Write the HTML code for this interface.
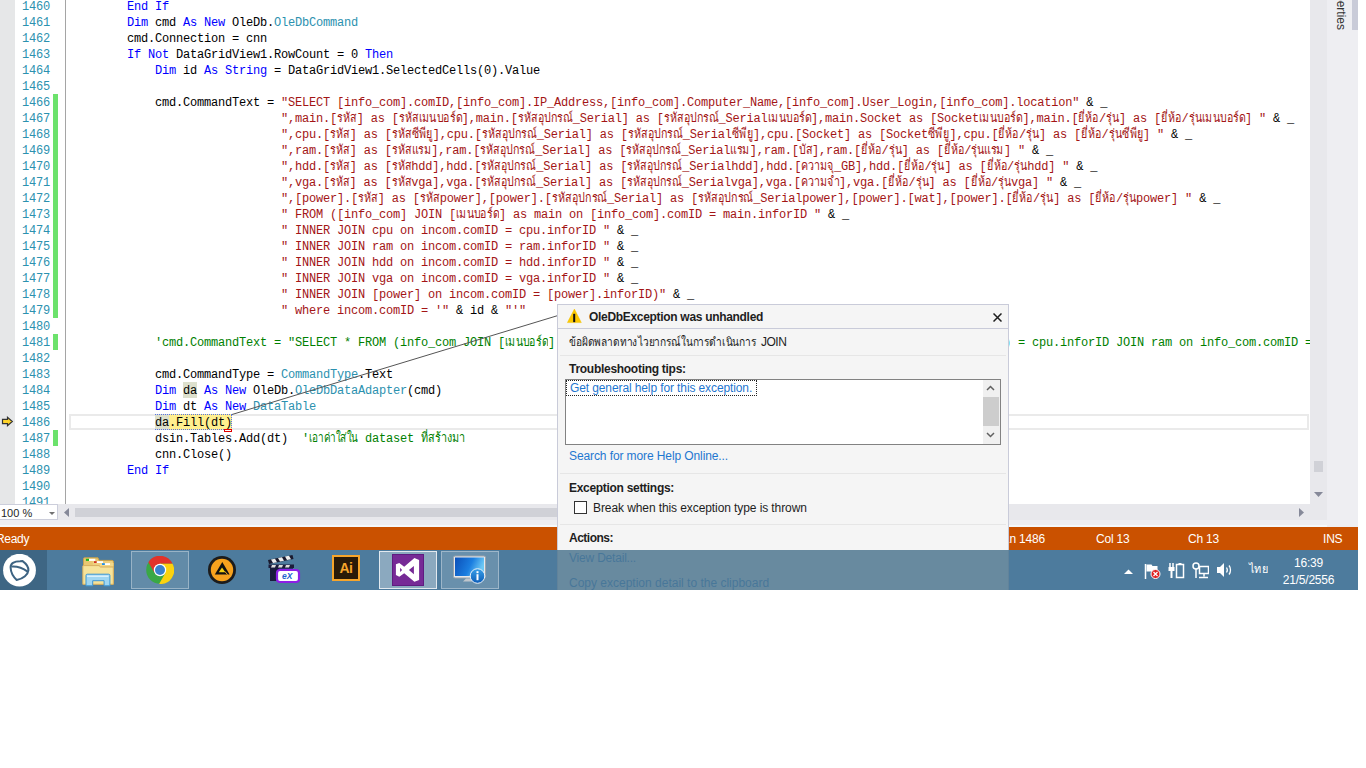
<!DOCTYPE html>
<html><head><meta charset="utf-8">
<style>
*{box-sizing:border-box}
html,body{margin:0;padding:0}
body{width:1366px;height:768px;background:#fff;position:relative;overflow:hidden;font-family:"Liberation Sans",sans-serif}
.a{position:absolute}
#scr{position:absolute;left:0;top:0;width:1358px;height:590px;background:#eeeef2;overflow:hidden}
#ed{position:absolute;left:0;top:0;width:1310px;height:504px;background:#fff;overflow:hidden}
#marg{position:absolute;left:0;top:0;width:15px;height:505px;background:#e6e7e8}
.ln{position:absolute;left:15px;width:35px;height:16px;line-height:16px;text-align:right;font-family:"Liberation Mono",monospace;font-size:12px;letter-spacing:-0.2px;color:#2b91af;white-space:pre}
.cl{position:absolute;height:16px;line-height:16px;font-family:"Liberation Mono",monospace;font-size:12px;letter-spacing:-0.2px;color:#000;white-space:pre}
.cl i{font-style:normal;display:inline-block;letter-spacing:0;overflow:visible;white-space:pre}
.cl i b{font-weight:normal;display:inline-block;font-size:13px;transform-origin:0 0}
.k{color:#0000ff}.t{color:#2b91af}.s{color:#a31515}.c{color:#008000}
.hl1{background:#dde0cd}
.hl2{background:#ffef8f}
.gb{position:absolute;left:53px;width:5px;background:#6ce26c}
#sep{position:absolute;left:65px;top:0;width:1px;height:505px;background:#a5a5a5}
#cur{position:absolute;left:69px;top:414px;width:1240px;height:16px;border:2px solid #eaeaea}

#vs{position:absolute;left:1310px;top:0;width:17px;height:520px;background:#e8e8ec}
#side{position:absolute;left:1327px;top:0;width:31px;height:527px;background:#eeeef2}
#hs{position:absolute;left:0;top:504px;width:1310px;height:16px;background:#e8e8ec}
#zoom{position:absolute;left:0;top:504px;width:58px;height:16px;background:#fff;border:1px solid #cccedb;border-left:0;font-size:11px;line-height:15px;padding-left:1px;padding-top:1px;color:#1e1e1e;letter-spacing:0px}
#status{position:absolute;left:0;top:527px;width:1358px;height:23px;background:#ca5100;color:#fff;font-size:12px;line-height:23px}
#status span{position:absolute;top:1px;white-space:pre}
#tb{position:absolute;left:0;top:550px;width:1358px;height:40px;background:linear-gradient(90deg,#4a7aa0 0%,#4f80a6 40%,#4a789c 70%,#467597 100%)}
.btn{position:absolute;top:1px;width:58px;height:38px;border:1px solid rgba(255,255,255,.35);background:rgba(255,255,255,.12)}
#dlg{position:absolute;left:557px;top:304px;width:452px;height:300px;background:#f5f5f5;border:1px solid #c9cbd9;font-size:12px;color:#1e1e1e}
#dlg .b{font-weight:bold;position:absolute;white-space:pre}
#dlg .p{position:absolute;white-space:pre}
.sepl{position:absolute;left:2px;width:446px;height:1px;background:#e6e6e6}
#tbov{position:absolute;left:0;top:550px;width:1358px;height:40px;}
</style></head><body>
<div id="scr">
 <div id="ed">
  <div id="marg"></div>
  <div class="ln" style="top:-1px">1460</div>
<div class="ln" style="top:15px">1461</div>
<div class="ln" style="top:31px">1462</div>
<div class="ln" style="top:47px">1463</div>
<div class="ln" style="top:63px">1464</div>
<div class="ln" style="top:79px">1465</div>
<div class="ln" style="top:95px">1466</div>
<div class="ln" style="top:111px">1467</div>
<div class="ln" style="top:127px">1468</div>
<div class="ln" style="top:143px">1469</div>
<div class="ln" style="top:159px">1470</div>
<div class="ln" style="top:175px">1471</div>
<div class="ln" style="top:191px">1472</div>
<div class="ln" style="top:207px">1473</div>
<div class="ln" style="top:223px">1474</div>
<div class="ln" style="top:239px">1475</div>
<div class="ln" style="top:255px">1476</div>
<div class="ln" style="top:271px">1477</div>
<div class="ln" style="top:287px">1478</div>
<div class="ln" style="top:303px">1479</div>
<div class="ln" style="top:319px">1480</div>
<div class="ln" style="top:335px">1481</div>
<div class="ln" style="top:351px">1482</div>
<div class="ln" style="top:367px">1483</div>
<div class="ln" style="top:383px">1484</div>
<div class="ln" style="top:399px">1485</div>
<div class="ln" style="top:415px">1486</div>
<div class="ln" style="top:431px">1487</div>
<div class="ln" style="top:447px">1488</div>
<div class="ln" style="top:463px">1489</div>
<div class="ln" style="top:479px">1490</div>
<div class="ln" style="top:495px">1491</div>
  <div class="gb" style="top:94px;height:224px"></div>
  <div class="gb" style="top:334px;height:16px"></div>
  <div class="gb" style="top:430px;height:16px"></div>
  <div id="sep"></div>
  <div id="cur"></div>
  <!-- execution arrow -->
  <svg class="a" style="left:1px;top:416px" width="13" height="11" viewBox="0 0 13 11"><path d="M1.5 3.4H6.5V1.3L11.3 5.5L6.5 9.7V7.6H1.5z" fill="#ffd42a" stroke="#333" stroke-width="1.2" stroke-linejoin="miter"/></svg>
  <div class="cl" style="top:-1px;left:127px"><span class="k">End If</span></div>
<div class="cl" style="top:15px;left:127px"><span class="k">Dim</span> cmd <span class="k">As New</span> OleDb.<span class="t">OleDbCommand</span></div>
<div class="cl" style="top:31px;left:127px">cmd.Connection = cnn</div>
<div class="cl" style="top:47px;left:127px"><span class="k">If Not</span> DataGridView1.RowCount = 0 <span class="k">Then</span></div>
<div class="cl" style="top:63px;left:155px"><span class="k">Dim</span> id <span class="k">As String</span> = DataGridView1.SelectedCells(0).Value</div>
<div class="cl" style="top:95px;left:155px">cmd.CommandText = <span class="s">"SELECT [info_com].comID,[info_com].IP_Address,[info_com].Computer_Name,[info_com].User_Login,[info_com].location"</span> &amp; _</div>
<div class="cl" style="top:111px;left:281px"><span class="s">",main.[<i style="width:19.66px"><b style="transform:scaleX(0.819)">รหัส</b></i>] as [<i style="width:63.09px"><b style="transform:scaleX(0.819)">รหัสเมนบอร์ด</b></i>],main.[<i style="width:54.89px"><b style="transform:scaleX(0.819)">รหัสอุปกรณ์</b></i>_Serial] as [<i style="width:54.89px"><b style="transform:scaleX(0.819)">รหัสอุปกรณ์</b></i>_Serial<i style="width:43.42px"><b style="transform:scaleX(0.819)">เมนบอร์ด</b></i>],main.Socket as [Socket<i style="width:43.42px"><b style="transform:scaleX(0.819)">เมนบอร์ด</b></i>],main.[<i style="width:20.48px"><b style="transform:scaleX(0.819)">ยี่ห้อ</b></i>/<i style="width:13.11px"><b style="transform:scaleX(0.819)">รุ่น</b></i>] as [<i style="width:20.48px"><b style="transform:scaleX(0.819)">ยี่ห้อ</b></i>/<i style="width:56.53px"><b style="transform:scaleX(0.819)">รุ่นเมนบอร์ด</b></i>] "</span> &amp; _</div>
<div class="cl" style="top:127px;left:281px"><span class="s">",cpu.[<i style="width:19.70px"><b style="transform:scaleX(0.821)">รหัส</b></i>] as [<i style="width:41.03px"><b style="transform:scaleX(0.821)">รหัสซีพียู</b></i>],cpu.[<i style="width:54.98px"><b style="transform:scaleX(0.821)">รหัสอุปกรณ์</b></i>_Serial] as [<i style="width:54.98px"><b style="transform:scaleX(0.821)">รหัสอุปกรณ์</b></i>_Serial<i style="width:21.34px"><b style="transform:scaleX(0.821)">ซีพียู</b></i>],cpu.[Socket] as [Socket<i style="width:21.34px"><b style="transform:scaleX(0.821)">ซีพียู</b></i>],cpu.[<i style="width:20.52px"><b style="transform:scaleX(0.821)">ยี่ห้อ</b></i>/<i style="width:13.13px"><b style="transform:scaleX(0.821)">รุ่น</b></i>] as [<i style="width:20.52px"><b style="transform:scaleX(0.821)">ยี่ห้อ</b></i>/<i style="width:34.47px"><b style="transform:scaleX(0.821)">รุ่นซีพียู</b></i>] "</span> &amp; _</div>
<div class="cl" style="top:143px;left:281px"><span class="s">",ram.[<i style="width:19.70px"><b style="transform:scaleX(0.821)">รหัส</b></i>] as [<i style="width:39.41px"><b style="transform:scaleX(0.821)">รหัสแรม</b></i>],ram.[<i style="width:55.01px"><b style="transform:scaleX(0.821)">รหัสอุปกรณ์</b></i>_Serial] as [<i style="width:55.01px"><b style="transform:scaleX(0.821)">รหัสอุปกรณ์</b></i>_Serial<i style="width:19.70px"><b style="transform:scaleX(0.821)">แรม</b></i>],ram.[<i style="width:13.14px"><b style="transform:scaleX(0.821)">บัส</b></i>],ram.[<i style="width:20.53px"><b style="transform:scaleX(0.821)">ยี่ห้อ</b></i>/<i style="width:13.14px"><b style="transform:scaleX(0.821)">รุ่น</b></i>] as [<i style="width:20.53px"><b style="transform:scaleX(0.821)">ยี่ห้อ</b></i>/<i style="width:32.84px"><b style="transform:scaleX(0.821)">รุ่นแรม</b></i>] "</span> &amp; _</div>
<div class="cl" style="top:159px;left:281px"><span class="s">",hdd.[<i style="width:19.66px"><b style="transform:scaleX(0.819)">รหัส</b></i>] as [<i style="width:19.66px"><b style="transform:scaleX(0.819)">รหัส</b></i>hdd],hdd.[<i style="width:54.88px"><b style="transform:scaleX(0.819)">รหัสอุปกรณ์</b></i>_Serial] as [<i style="width:54.88px"><b style="transform:scaleX(0.819)">รหัสอุปกรณ์</b></i>_Serialhdd],hdd.[<i style="width:32.76px"><b style="transform:scaleX(0.819)">ความจุ</b></i>_GB],hdd.[<i style="width:20.48px"><b style="transform:scaleX(0.819)">ยี่ห้อ</b></i>/<i style="width:13.11px"><b style="transform:scaleX(0.819)">รุ่น</b></i>] as [<i style="width:20.48px"><b style="transform:scaleX(0.819)">ยี่ห้อ</b></i>/<i style="width:13.11px"><b style="transform:scaleX(0.819)">รุ่น</b></i>hdd] "</span> &amp; _</div>
<div class="cl" style="top:175px;left:281px"><span class="s">",vga.[<i style="width:19.60px"><b style="transform:scaleX(0.817)">รหัส</b></i>] as [<i style="width:19.60px"><b style="transform:scaleX(0.817)">รหัส</b></i>vga],vga.[<i style="width:54.72px"><b style="transform:scaleX(0.817)">รหัสอุปกรณ์</b></i>_Serial] as [<i style="width:54.72px"><b style="transform:scaleX(0.817)">รหัสอุปกรณ์</b></i>_Serialvga],vga.[<i style="width:38.39px"><b style="transform:scaleX(0.817)">ความจำ</b></i>],vga.[<i style="width:20.42px"><b style="transform:scaleX(0.817)">ยี่ห้อ</b></i>/<i style="width:13.07px"><b style="transform:scaleX(0.817)">รุ่น</b></i>] as [<i style="width:20.42px"><b style="transform:scaleX(0.817)">ยี่ห้อ</b></i>/<i style="width:13.07px"><b style="transform:scaleX(0.817)">รุ่น</b></i>vga] "</span> &amp; _</div>
<div class="cl" style="top:191px;left:281px"><span class="s">",[power].[<i style="width:19.82px"><b style="transform:scaleX(0.826)">รหัส</b></i>] as [<i style="width:19.82px"><b style="transform:scaleX(0.826)">รหัส</b></i>power],[power].[<i style="width:55.33px"><b style="transform:scaleX(0.826)">รหัสอุปกรณ์</b></i>_Serial] as [<i style="width:55.33px"><b style="transform:scaleX(0.826)">รหัสอุปกรณ์</b></i>_Serialpower],[power].[wat],[power].[<i style="width:20.64px"><b style="transform:scaleX(0.826)">ยี่ห้อ</b></i>/<i style="width:13.21px"><b style="transform:scaleX(0.826)">รุ่น</b></i>] as [<i style="width:20.64px"><b style="transform:scaleX(0.826)">ยี่ห้อ</b></i>/<i style="width:13.21px"><b style="transform:scaleX(0.826)">รุ่น</b></i>power] "</span> &amp; _</div>
<div class="cl" style="top:207px;left:281px"><span class="s">" FROM ([info_com] JOIN [<i style="width:43.00px"><b style="transform:scaleX(0.811)">เมนบอร์ด</b></i>] as main on [info_com].comID = main.inforID "</span> &amp; _</div>
<div class="cl" style="top:223px;left:281px"><span class="s">" INNER JOIN cpu on incom.comID = cpu.inforID "</span> &amp; _</div>
<div class="cl" style="top:239px;left:281px"><span class="s">" INNER JOIN ram on incom.comID = ram.inforID "</span> &amp; _</div>
<div class="cl" style="top:255px;left:281px"><span class="s">" INNER JOIN hdd on incom.comID = hdd.inforID "</span> &amp; _</div>
<div class="cl" style="top:271px;left:281px"><span class="s">" INNER JOIN vga on incom.comID = vga.inforID "</span> &amp; _</div>
<div class="cl" style="top:287px;left:281px"><span class="s">" INNER JOIN [power] on incom.comID = [power].inforID)"</span> &amp; _</div>
<div class="cl" style="top:303px;left:281px"><span class="s">" where incom.comID = '"</span> &amp; id &amp; <span class="s">"'"</span></div>
<div class="cl" style="top:335px;left:155px"><span class=c>'cmd.CommandText = "SELECT * FROM (info_com JOIN [<i style="width:43.00px"><b style="transform:scaleX(0.811)">เมนบอร์ด</b></i>] as main on info_com.comID = main.inforID) JOIN cpu on info_com.comID = cpu.inforID JOIN ram on info_com.comID = </span></div>
<div class="cl" style="top:335px;left:1004px;background:#fff;padding-right:40px"><span class="c">) = cpu.inforID JOIN ram on info_com.comID = main.inforID</span></div>
<div class="cl" style="top:367px;left:155px">cmd.CommandType = <span class="t">CommandType</span>.Text</div>
<div class="a" style="left:183px;top:382px;width:14px;height:16px;background:#dde0cd"></div>
<div class="cl" style="top:383px;left:155px"><span class="k">Dim</span> da <span class="k">As New</span> OleDb.<span class="t">OleDbDataAdapter</span>(cmd)</div>
<div class="cl" style="top:399px;left:155px"><span class="k">Dim</span> dt <span class="k">As New</span> <span class="t">DataTable</span></div>
<div class="a" style="left:155px;top:414px;width:14px;height:16px;background:#dde0cd"></div><div class="a" style="left:169px;top:414px;width:63px;height:16px;background:#ffef8f"></div><div class="cl" style="top:415px;left:155px">da.Fill(dt)</div>
<div class="cl" style="top:431px;left:155px">dsin.Tables.Add(dt)  <span class="c">'<i style="width:49.00px"><b style="transform:scaleX(0.766)">เอาค่าใส่ใน</b></i> dataset <i style="width:44.00px"><b style="transform:scaleX(0.830)">ที่สร้างมา</b></i></span></div>
<div class="cl" style="top:447px;left:155px">cnn.Close()</div>
<div class="cl" style="top:463px;left:127px"><span class="k">End If</span></div>
  <div class="a" style="left:155px;top:429px;width:77px;height:1px;border-top:1px dotted #5a74e6"></div>
  <div class="a" style="left:155px;top:414px;width:77px;height:1px;border-top:1px dotted #5a74e6"></div>
  <div class="a" style="left:231px;top:414px;width:1px;height:16px;border-left:1px dotted #5a74e6"></div>
  <div class="a" style="left:224px;top:429px;width:8px;height:3px;border:1px solid #e00000;background:#fff"></div>
  <svg class="a" style="left:0;top:0" width="1310" height="505"><line x1="232" y1="414.5" x2="558" y2="315.5" stroke="#555" stroke-width="1"/></svg>
 </div>

 <div id="vs">
  <div class="a" style="left:4px;top:461px;width:9px;height:11px;background:#d0d1d7"></div>
  <svg class="a" style="left:4px;top:492px" width="9" height="5"><path d="M0 0H9L4.5 5z" fill="#868999"/></svg>
 </div>
 <div id="side">
  <div class="a" style="left:25px;top:0;width:6px;height:30px;background:#c9cbd8"></div>
  <div class="a" style="left:3px;top:-30px;width:30px;height:14px;transform:rotate(90deg);transform-origin:0 0;left:21px;font-size:12px;color:#333;white-space:pre;line-height:14px;text-align:right;width:60px">operties</div>
 </div>
 <div id="hs">
  <svg class="a" style="left:64px;top:4px" width="5" height="9"><path d="M5 0V9L0 4.5z" fill="#868999"/></svg>
  <div class="a" style="left:75px;top:4px;width:600px;height:9px;background:#d0d1d7"></div>
  <svg class="a" style="left:1299px;top:4px" width="5" height="9"><path d="M0 0V9L5 4.5z" fill="#868999"/></svg>
 </div>
 <div id="zoom">100 %<svg class="a" style="left:49px;top:7px" width="6" height="3"><path d="M0 0H6L3 3z" fill="#717171"/></svg></div>
 <div class="a" style="left:0;top:525px;width:1327px;height:2px;background:#f5f9fc"></div>
 <div id="status">
  <span style="left:-4px;letter-spacing:-0.3px">Ready</span>
  <span style="left:1003px;letter-spacing:-0.2px">Ln 1486</span>
  <span style="left:1096px;letter-spacing:-0.2px">Col 13</span>
  <span style="left:1188px;letter-spacing:-0.2px">Ch 13</span>
  <span style="left:1323px;letter-spacing:-0.2px">INS</span>
 </div>
 <div class="a" style="left:0;top:550px;width:1358px;height:40px;background:rgb(72,145,232)"></div>
 <div id="dlg">
  <div class="a" style="left:0;top:0;width:450px;height:24px;background:#f5f5f5;border-bottom:1px solid #c9cbd9"></div>
  <svg class="a" style="left:9px;top:3px" width="16" height="16" viewBox="0 0 16 16"><path d="M7.4 1.1L14.3 14.6H0.4z" fill="#fcc800" stroke="#f0c000" stroke-width=".5" stroke-linejoin="round"/><rect x="6.2" y="5.8" width="2" height="8.3" fill="#111"/></svg>
  <div class="b" style="left:31px;top:5px;line-height:14px;letter-spacing:-0.31px;color:#1e1e1e">OleDbException was unhandled</div>
  <svg class="a" style="left:435px;top:8px" width="9" height="9"><path d="M0.5 0.5L8.5 8.5M8.5 0.5L0.5 8.5" stroke="#1e1e1e" stroke-width="1.5"/></svg>
  <div class="p" style="left:11px;top:30px;line-height:14px;font-size:12px;color:#1e1e1e"><i style="font-style:normal;display:inline-block;width:187px"><b style="font-weight:normal;display:inline-block;font-size:12px;transform-origin:0 0;transform:scaleX(0.85)">ข้อผิดพลาดทางไวยากรณ์ในการดำเนินการ</b></i></div>
  <div class="p" style="left:203px;top:30px;line-height:14px;letter-spacing:-0.5px">JOIN</div>
  <div class="sepl" style="top:50px"></div>
  <div class="b" style="left:11px;top:57px;line-height:14px;letter-spacing:-0.28px">Troubleshooting tips:</div>
  <div class="a" style="left:7px;top:74px;width:436px;height:66px;background:#fff;border:1px solid #828282">
    <div class="a" style="left:0px;top:0px;width:191px;height:16px;border:1px dotted #222"></div>
    <div class="p" style="left:4px;top:1px;line-height:14px;color:#1f77d0;letter-spacing:-0.11px">Get general help for this exception.</div>
    <div class="a" style="left:417px;top:0;width:17px;height:64px;background:#f0f0f0"></div>
    <div class="a" style="left:417px;top:17px;width:16px;height:29px;background:#cdcdcd"></div>
    <svg class="a" style="left:420px;top:5px" width="9" height="6"><path d="M1 5L4.5 1.5L8 5" fill="none" stroke="#606060" stroke-width="1.5"/></svg>
    <svg class="a" style="left:420px;top:52px" width="9" height="6"><path d="M1 1L4.5 4.5L8 1" fill="none" stroke="#606060" stroke-width="1.5"/></svg>
  </div>
  <div class="p" style="left:11px;top:144px;line-height:14px;color:#1f77d0;letter-spacing:-0.1px">Search for more Help Online...</div>
  <div class="sepl" style="top:168px"></div>
  <div class="b" style="left:11px;top:176px;line-height:14px;letter-spacing:-0.3px">Exception settings:</div>
  <div class="a" style="left:16px;top:196px;width:13px;height:13px;background:#fff;border:1px solid #333"></div>
  <div class="p" style="left:35px;top:196px;line-height:14px;letter-spacing:-0.09px">Break when this exception type is thrown</div>
  <div class="sepl" style="top:219px"></div>
  <div class="b" style="left:11px;top:226px;line-height:14px;letter-spacing:-0.5px">Actions:</div>
  <div class="p" style="left:11px;top:246px;line-height:14px;color:#1f77d0;letter-spacing:-0.2px">View Detail...</div>
  <div class="p" style="left:11px;top:271px;line-height:14px;color:#1f77d0;letter-spacing:0px">Copy exception detail to the clipboard</div>
</div>

 <div id="tb" style="background:rgba(79,119,143,0.85)">
  <div class="a" style="left:0;top:0;width:47px;height:40px;background:rgba(20,40,60,.25)"></div>
  <svg class="a" style="left:3px;top:554px;top:4px" width="34" height="34" viewBox="0 0 34 34"><circle cx="16.5" cy="16.2" r="16.4" fill="#fff"/><path d="M7.6 13.5C7.4 9.5 11 7.2 17 7.2L19.6 7.1C22.5 9.2 25.6 11.5 25.4 16.3C25 20.5 20.5 24.5 13.7 26C10.5 23 7.8 19 7.6 13.5Z" fill="none" stroke="#3d6382" stroke-width="2" stroke-linejoin="round"/><path d="M8.3 12.6C14 12.2 20 14.2 24.6 17.6" fill="none" stroke="#3d6382" stroke-width="2"/></svg>
  <!-- explorer -->
  <svg class="a" style="left:82px;top:7px" width="33" height="31" viewBox="0 0 33 31"><path d="M1.5 5.5V1.8Q1.5 0.8 2.5 0.8H16L17 3.4H30Q31.5 3.4 31.5 5V27H1.5z" fill="#e9c770" stroke="#c9a24c" stroke-width="1"/><rect x="3.9" y="1.8" width="3.1" height="2.1" fill="#1bb81b"/><rect x="7" y="1.8" width="6.3" height="2.1" fill="#fff"/><path d="M10.7 4.2H30.5V8H10.7z" fill="#eed080"/><rect x="12" y="4.2" width="2.8" height="1.8" fill="#d23020"/><rect x="14.8" y="4.2" width="6.2" height="1.8" fill="#fff"/><path d="M18 6H31.5V9.6H18z" fill="#f2d88a"/><rect x="20" y="6.2" width="2.9" height="1.8" fill="#1e8ff0"/><rect x="22.9" y="6.2" width="5.1" height="1.8" fill="#fff"/><path d="M0.8 9Q0.8 8.6 1.5 8.6H17L18.5 10H31.3V27.3H0.8z" fill="#f6e39a" stroke="#d8b060" stroke-width="1"/><path d="M4 28.8V18.4Q4 17.2 5.2 17.2H26.6Q27.9 17.2 27.9 18.4V28.8H22.1V23.7H10.7V28.8z" fill="#9fd6f2" stroke="#3d97d6" stroke-width="1"/><path d="M5 18.5H26.5V20H5z" fill="#d8f0fc"/></svg>
  <div class="btn" style="left:131px"></div>
  <!-- chrome -->
  <svg class="a" style="left:146px;top:6px" width="28" height="28" viewBox="0 0 28 28"><circle cx="14" cy="14" r="13.8" fill="#3aa845"/><path d="M14 7.8L26.55 7.8A13.8 13.8 0 0 0 2.36 6.23L8.63 17.1L14 14z" fill="#e2332a"/><path d="M19.37 17.1L13.1 27.97A13.8 13.8 0 0 0 26.55 7.8L14 7.8L14 14z" fill="#fcd20f"/><circle cx="14" cy="14" r="6.2" fill="#fff"/><circle cx="14" cy="14" r="5" fill="#3b82cc"/></svg>
  <!-- aimp -->
  <svg class="a" style="left:208px;top:6px" width="29" height="29" viewBox="0 0 29 29"><circle cx="14" cy="14" r="14" fill="#1c1c1c"/><circle cx="14" cy="14" r="11.2" fill="#f7a21e"/><path d="M14.3 6L21.6 18.5H6.8z" fill="#111"/><path d="M14 11.6L17.3 16.3H10.8z" fill="#f5d010"/><path d="M16.6 15.2L19.6 18.6" stroke="#f7b020" stroke-width="1"/></svg>
  <!-- video -->
  <svg class="a" style="left:267px;top:4px" width="34" height="31" viewBox="0 0 34 31"><path d="M1 6L25.5 1L26.5 5L2 10z" fill="#1a1a2e"/><path d="M4 5.5l4-0.8 2 3.5-4 0.8zM11 4l4-0.8 2 3.5-4 0.8zM18 2.6l4-0.8 2 3.5-4 0.8z" fill="#eee"/><path d="M1.5 10.5H27V14H1.5z" fill="#1c1c3a"/><path d="M5 11h4l-1 2.5H4zM12 11h4l-1 2.5h-4zM19 11h4l-1 2.5h-4z" fill="#ddd"/><path d="M3 14H26V27H3z" fill="#2a2f6a"/><path d="M3 14H12V27H3z" fill="#12122a" opacity=".7"/><rect x="10" y="16" width="22" height="12" rx="3" fill="#fff" stroke="#8d1ee6" stroke-width="2.2"/><text x="15" y="25" font-family="Liberation Sans" font-weight="bold" font-style="italic" font-size="8.5" fill="#1e5fd0">eX</text></svg>
  <!-- Ai -->
  <div class="a" style="left:332px;top:5px;width:28px;height:26px;background:#2a1a08;border:2px solid #f7a52b;color:#f7a52b;font-weight:bold;font-size:14px;line-height:22px;text-align:center;letter-spacing:-0.5px">Ai</div>
  <div class="btn" style="left:379px;background:rgba(255,255,255,.35);border-color:rgba(255,255,255,.75)"></div>
  <!-- VS -->
  <svg class="a" style="left:392px;top:4px" width="32" height="32" viewBox="0 0 32 32"><rect x="0.5" y="0.5" width="31" height="31" fill="#762a96" stroke="#5f1b80" stroke-width="1"/><path d="M3.9 10.3L7.3 9L12.2 12.7L22.4 4.1L27.1 5.9L27.1 26L22.4 27.8L12.2 19.2L7.3 22.8L3.9 21Z M8.1 13.7L10.1 16L8.1 18.1Z M21.9 11.9L16.9 16L21.9 20.2Z" fill="#fff" fill-rule="evenodd"/></svg>
  <div class="btn" style="left:441px;background:rgba(255,255,255,.16)"></div>
  <!-- monitor info -->
  <svg class="a" style="left:453px;top:5px" width="34" height="31" viewBox="0 0 34 31"><defs><linearGradient id="gscr" x1="0" y1="0" x2="1" y2="0.3"><stop offset="0" stop-color="#0b4fb8"/><stop offset="0.6" stop-color="#1b7ee0"/><stop offset="1" stop-color="#6cc8f4"/></linearGradient><linearGradient id="gic" x1="0" y1="0" x2="0" y2="1"><stop offset="0" stop-color="#3aa0e8"/><stop offset="1" stop-color="#0b5cb8"/></linearGradient></defs><rect x="0.5" y="1" width="32" height="22" rx="1.5" fill="#e6e9ec" stroke="#9aa2aa" stroke-width="1"/><rect x="2" y="2.5" width="29" height="18.5" fill="url(#gscr)"/><path d="M10 26.5h12l1-3h-10z" fill="#c0c6cc"/><circle cx="24.5" cy="21" r="7.3" fill="url(#gic)" stroke="#e8f0f8" stroke-width="1"/><rect x="23.5" y="19.2" width="2" height="6" fill="#fff"/><rect x="23.5" y="16.2" width="2" height="2" fill="#fff"/></svg>
  <!-- tray -->
  <svg class="a" style="left:1124px;top:19px" width="9" height="5"><path d="M0 5L4.5 0.5L9 5z" fill="#fff"/></svg>
  <svg class="a" style="left:1144px;top:13px" width="17" height="16" viewBox="0 0 17 16"><path d="M1.5 1v15" stroke="#fff" stroke-width="1.5"/><path d="M2.5 1.5h5l1 1.5h5v7h-5l-1-1.5h-5z" fill="#fff"/><circle cx="11.5" cy="11" r="4.5" fill="#e02020" stroke="#fff" stroke-width="1"/><path d="M9.5 9l4 4M13.5 9l-4 4" stroke="#fff" stroke-width="1.3"/></svg>
  <svg class="a" style="left:1168px;top:12px" width="17" height="17" viewBox="0 0 17 17"><path d="M2 1v4M5 1v4" stroke="#fff" stroke-width="1.5"/><rect x="0.5" y="5" width="6" height="4" fill="#fff"/><rect x="2.5" y="9" width="2" height="7" fill="#fff"/><rect x="8.5" y="2.5" width="7" height="13" fill="none" stroke="#fff" stroke-width="1.5"/><rect x="10.5" y="1" width="3" height="1.5" fill="#fff"/></svg>
  <svg class="a" style="left:1192px;top:12px" width="17" height="17" viewBox="0 0 17 17"><circle cx="4" cy="4" r="3" fill="none" stroke="#fff" stroke-width="1.5"/><path d="M4 7v9" stroke="#fff" stroke-width="1.5"/><rect x="7.5" y="4.5" width="9" height="7" fill="none" stroke="#fff" stroke-width="1.5"/><path d="M12 11.5v3M7 15.5h9" stroke="#fff" stroke-width="1.5"/></svg>
  <svg class="a" style="left:1216px;top:12px" width="16" height="16" viewBox="0 0 16 16"><path d="M1 5h3l4-4v14l-4-4H1z" fill="#fff"/><path d="M10.5 5.5c1 1.5 1 3.5 0 5M13 3.5c2 2.5 2 6.5 0 9" fill="none" stroke="#fff" stroke-width="1.3"/></svg>
  <div class="a" style="left:1249px;top:11px;font-size:11px;color:#fff;line-height:16px"><i style="font-style:normal;display:inline-block;width:19px"><b style="font-weight:normal;display:inline-block;font-size:12px;transform-origin:0 0;transform:scaleX(0.79)">ไทย</b></i></div>
  <div class="a" style="left:1280px;top:5px;width:57px;text-align:center;font-size:12px;line-height:17px;color:#fff;letter-spacing:-0.2px">16:39<br>21/5/2556</div>
</div>

</div>
<script>document.querySelectorAll("i>b").forEach(function(b){var w=parseFloat(b.parentElement.style.width),n=b.offsetWidth;if(n>0&&w>0)b.style.transform="scaleX("+(w/n).toFixed(4)+")";});</script>
</body></html>
